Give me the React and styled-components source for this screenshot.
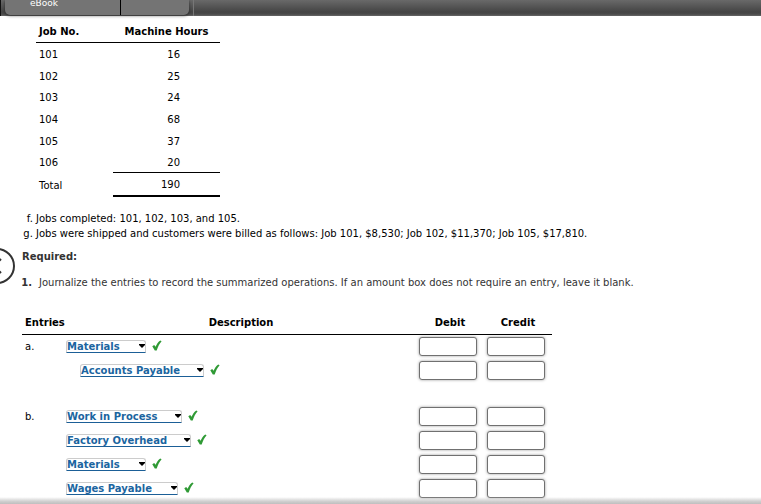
import React from "react";
import styled, { createGlobalStyle } from "styled-components";

const GlobalStyle = createGlobalStyle`
  *, *::before, *::after { box-sizing: border-box; }
  body {
    margin: 0;
    background: #fff;
    color: #000;
    font: 10px/15px Verdana, "DejaVu Sans", sans-serif;
  }
`;

const Page = styled.div`
  min-height: 100vh;
  overflow: hidden;
`;

const TopBar = styled.header`
  display: flex;
  align-items: stretch;
  height: 16px;
  padding-left: 4px;
  background: linear-gradient(#696969, #444 75%, #4a4a4a 88%, #666);
  border-left: 1px solid #111;
`;

const Tabs = styled.nav`
  display: flex;
  height: 15px;
  border-radius: 0 0 5px 5px;
  background: #747474;
  box-shadow: 0 1px 3px rgba(0, 0, 0, 0.5);
`;

const Tab = styled.button`
  display: flex;
  align-items: flex-end;
  width: ${(p) => p.$width}px;
  height: 15px;
  padding: 0 0 6px 25px;
  border: 0;
  background: transparent;
  color: #fff;
  font: 9px/11px Verdana, "DejaVu Sans", sans-serif;

  & + & {
    border-left: 1px solid #000;
  }
`;

const BarDivider = styled.span`
  width: 1px;
  margin-left: 4px;
  background: #777;
`;

const Main = styled.main`
  padding: 5px 22px 0;
`;

const HoursTable = styled.table`
  width: 184px;
  margin-left: 14px;
  border-collapse: separate;
  border-spacing: 0;
  table-layout: fixed;
`;

const HoursHead = styled.th`
  width: ${(p) => p.$width}px;
  height: 22px;
  padding: ${(p) => (p.$center ? "0" : "0 3px")};
  border-bottom: 1px solid #000;
  text-align: ${(p) => (p.$center ? "center" : "left")};
  white-space: nowrap;
`;

const HoursRow = styled.tr`
  height: 22px;

  &:nth-child(3n) {
    height: 21px;
  }

  &:last-child {
    height: 24px;
  }
`;

const Job = styled.td`
  padding: 0 3px;
`;

const lines = {
  single: "1px solid #000",
  double: "2px solid #000",
};

const Hours = styled.td`
  padding: 0 40px 0 0;
  border-bottom: ${(p) => lines[p.$line] || "0"};
  text-align: right;
`;

const Facts = styled.ol`
  margin: 14px 0 0;
  padding-left: 14px;
  list-style: lower-alpha;
`;

const Required = styled.h2`
  margin: 8px 0 11px;
  color: #333;
  font-size: 10px;
  line-height: 15px;
`;

const Steps = styled.ol`
  margin: 0;
  padding-left: 17px;
  color: #333;

  li::marker {
    content: counter(list-item) ".\\00a0\\00a0";
    font-weight: bold;
  }
`;

const Journal = styled.table`
  width: 530px;
  margin-top: 20px;
  border-collapse: separate;
  border-spacing: 0;
  table-layout: fixed;
`;

const JournalHead = styled.th`
  width: ${(p) => p.$width}px;
  height: 25px;
  padding: 0 0 0 ${(p) => (p.$left ? 3 : 0)}px;
  border-bottom: 1px solid #000;
  text-align: ${(p) => (p.$left ? "left" : "center")};
  white-space: nowrap;
`;

const JournalCell = styled.td`
  height: 24px;
  padding: 0 0 2px ${(p) => p.$inset || 0}px;
`;

const Spacer = styled.td`
  height: 22px;
  padding: 0;
`;

const Account = styled.div`
  display: flex;
  align-items: center;
  padding-left: ${(p) => (p.$indent ? 14 : 0)}px;
`;

const Picker = styled.span`
  display: grid;
  align-items: center;
  width: ${(p) => p.$width}px;
  height: 13px;
  border: 1px solid #ccc;
  border-bottom-color: #1b5f97;
  border-radius: 3px 3px 0 0;

  & > * {
    grid-area: 1 / 1;
  }

  svg {
    justify-self: end;
    width: 6px;
    height: 4px;
    margin: 0 0 1px;
    pointer-events: none;
  }
`;

const Select = styled.select`
  width: 100%;
  height: 11px;
  padding: 0;
  border: 0;
  appearance: none;
  background: transparent;
  color: #1b65a0;
  font: bold 10px/11px Verdana, "DejaVu Sans", sans-serif;
`;

const Check = styled.svg`
  width: 10px;
  height: 11px;
  margin: 0 0 2px 6px;
`;

const Amount = styled.input`
  display: block;
  width: 58px;
  height: 19px;
  padding: 0 4px;
  border: 1px solid #707070;
  border-radius: 3px;
  background: #fff;
  box-shadow: 0 0 3px rgba(0, 0, 0, 0.4);
  font: inherit;
  text-align: right;
`;

const BackButton = styled.button`
  position: fixed;
  top: 248px;
  left: -21px;
  width: 36px;
  height: 36px;
  padding: 0;
  border: 2px solid #333;
  border-radius: 50%;
  background: #fff;

  svg {
    display: block;
    width: 32px;
    height: 32px;
  }
`;

const FooterShade = styled.div`
  position: fixed;
  right: 0;
  bottom: 0;
  left: 0;
  height: 7px;
  background: linear-gradient(rgba(255, 255, 255, 0), #d0d0d0 60%, #bebebe);
  pointer-events: none;
`;

const machineHours = [
  ["101", 16],
  ["102", 25],
  ["103", 24],
  ["104", 68],
  ["105", 37],
  ["106", 20, "single"],
  ["Total", 190, "double"],
];

const entries = [
  {
    id: "a",
    accounts: [
      { name: "Materials", width: 80 },
      { name: "Accounts Payable", width: 124, indent: true },
    ],
  },
  {
    id: "b",
    accounts: [
      { name: "Work in Process", width: 116 },
      { name: "Factory Overhead", width: 125 },
      { name: "Materials", width: 80 },
      { name: "Wages Payable", width: 112 },
    ],
  },
];

function AccountPicker({ name, width, indent, label }) {
  return (
    <Account $indent={indent}>
      <Picker $width={width}>
        <Select aria-label={label} defaultValue={name}>
          <option>{name}</option>
        </Select>
        <svg viewBox="0 0 6 4" aria-hidden="true">
          <path d="M0 0h6v1L3 4 0 1z" fill="#000" />
        </svg>
      </Picker>
      <Check viewBox="0 0 10 11" role="img" aria-label="Correct">
        <path d="M0.300 6.200L2.200 4.900L3.600 6.800C4.700 4.200 6 2.200 8.200 0.500L9.600 1.300C7.400 3.800 6 6.600 4.700 10.400H2.800z" fill="#2f9a35" />
      </Check>
    </Account>
  );
}

function EntryRows({ entry }) {
  return entry.accounts.map((account, i) => {
    const label = `Entry ${entry.id}, line ${i + 1}`;
    return (
      <tr key={label}>
        <JournalCell $inset={3}>{i === 0 ? `${entry.id}.` : ""}</JournalCell>
        <JournalCell>
          <AccountPicker {...account} label={`${label} account`} />
        </JournalCell>
        <JournalCell $inset={3}>
          <Amount type="text" aria-label={`${label} debit`} />
        </JournalCell>
        <JournalCell $inset={3}>
          <Amount type="text" aria-label={`${label} credit`} />
        </JournalCell>
      </tr>
    );
  });
}

export default function App() {
  return (
    <Page>
      <GlobalStyle />
      <TopBar>
        <Tabs>
          <Tab type="button" $width={115}>eBook</Tab>
          <Tab type="button" $width={69} aria-label="More resources" />
        </Tabs>
        <BarDivider />
      </TopBar>
      <Main>
        <HoursTable>
          <thead>
            <tr>
              <HoursHead $width={77}>Job No.</HoursHead>
              <HoursHead $width={107} $center>Machine Hours</HoursHead>
            </tr>
          </thead>
          <tbody>
            {machineHours.map(([job, hours, line]) => (
              <HoursRow key={job}>
                <Job>{job}</Job>
                <Hours $line={line}>{hours}</Hours>
              </HoursRow>
            ))}
          </tbody>
        </HoursTable>
        <Facts start={6}>
          <li>Jobs completed: 101, 102, 103, and 105.</li>
          <li>
            Jobs were shipped and customers were billed as follows: Job 101, $8,530; Job 102, $11,370; Job 105, $17,810.
          </li>
        </Facts>
        <Required>Required:</Required>
        <Steps>
          <li>
            Journalize the entries to record the summarized operations. If an amount box does not require an entry, leave it blank.
          </li>
        </Steps>
        <Journal>
          <thead>
            <tr>
              <JournalHead $width={44} $left>Entries</JournalHead>
              <JournalHead $width={350}>Description</JournalHead>
              <JournalHead $width={68}>Debit</JournalHead>
              <JournalHead $width={68}>Credit</JournalHead>
            </tr>
          </thead>
          <tbody>
            <EntryRows entry={entries[0]} />
            <tr>
              <Spacer colSpan={4} />
            </tr>
            <EntryRows entry={entries[1]} />
          </tbody>
        </Journal>
      </Main>
      <BackButton type="button" aria-label="Previous">
        <svg viewBox="0 0 32 32" fill="none" stroke="#333" strokeWidth="2" aria-hidden="true">
          <path d="M20 9l-7 7 7 7" />
        </svg>
      </BackButton>
      <FooterShade />
    </Page>
  );
}
